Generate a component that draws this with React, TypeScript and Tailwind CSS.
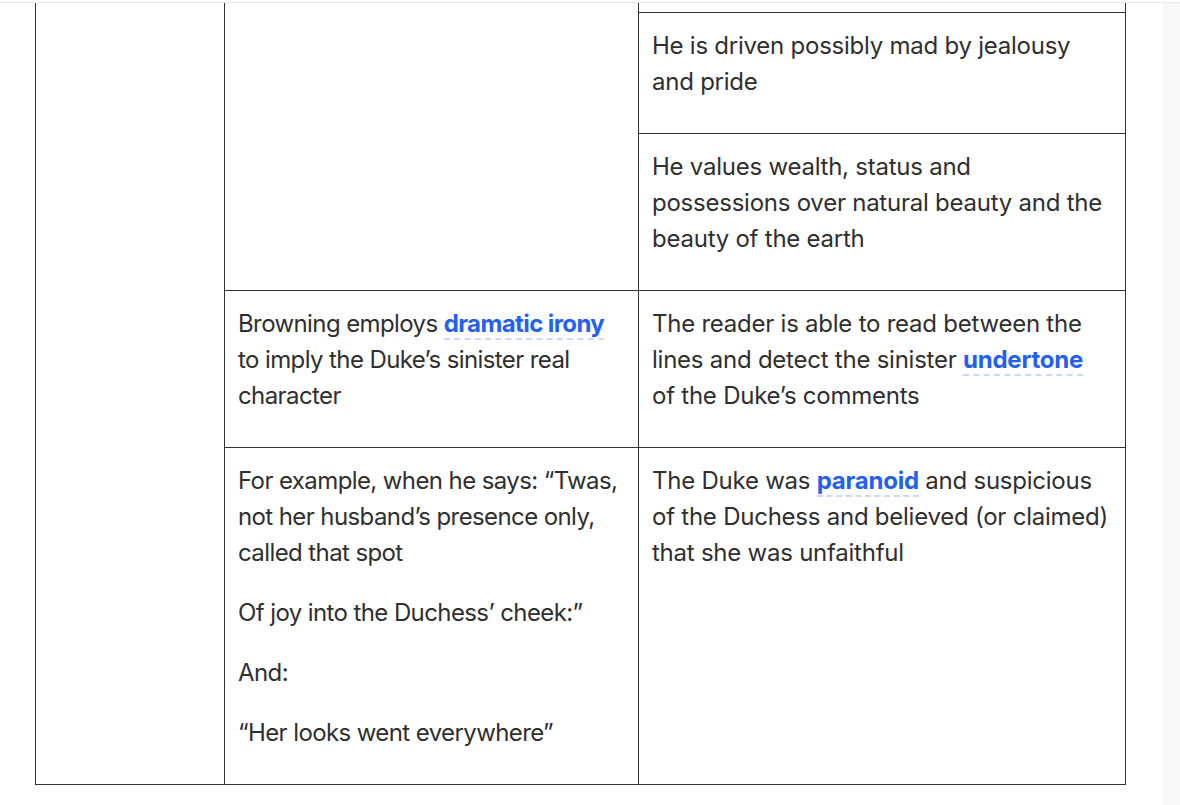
const Key = ({ children }: { children: string }) => (
  <span className="font-bold text-[#2260f2] border-b-2 border-dashed border-[#cbd8fc]">
    {children}
  </span>
)

const cell = "border border-[#333] align-top pt-[15px] pb-[9px] px-[13px]"
const left = `${cell} tracking-[-0.025em]`
const right = `${cell} tracking-[-0.01em]`

export default function App() {
  return (
    <div
      className="h-[805px] w-[1180px] bg-white text-[#2f2f2f] overflow-hidden flex flex-col"
      style={{ fontFamily: "Inter, 'Noto Sans', sans-serif" }}
    >
      {/* top bar edge */}
      <div className="h-[3px] border-b border-[#e6e6e6] shrink-0" />

      <div className="flex flex-1 min-h-0">
        <main className="flex-1 overflow-hidden pl-[35px]">
          <table className="border-collapse table-fixed -mt-[30px] text-[24px] leading-[36px] [&_p]:mb-6">
            <colgroup>
              <col className="w-[189px]" />
              <col className="w-[414px]" />
              <col className="w-[487px]" />
            </colgroup>
            <tbody>
              <tr className="h-[39px]">
                <td className="border border-[#333]" rowSpan={5} />
                <td className="border border-[#333]" rowSpan={3} />
                <td className="border border-[#333]" />
              </tr>
              <tr>
                <td className={right}>
                  <p>He is driven possibly mad by jealousy and pride</p>
                </td>
              </tr>
              <tr>
                <td className={right}>
                  <p>He values wealth, status and possessions over natural beauty and the beauty of the earth</p>
                </td>
              </tr>
              <tr>
                <td className={left}>
                  <p>
                    Browning employs <Key>dramatic irony</Key> to imply the Duke’s sinister real character
                  </p>
                </td>
                <td className={right}>
                  <p>
                    The reader is able to read between the lines and detect the sinister <Key>undertone</Key> of the
                    Duke’s comments
                  </p>
                </td>
              </tr>
              <tr>
                <td className={left}>
                  <p>For example, when he says: “Twas, not her husband’s presence only, called that spot</p>
                  <p>Of joy into the Duchess’ cheek:”</p>
                  <p>And:</p>
                  <p>“Her looks went everywhere”</p>
                </td>
                <td className={right}>
                  <p>
                    The Duke was <Key>paranoid</Key> and suspicious of the Duchess and believed (or claimed) that she
                    was unfaithful
                  </p>
                </td>
              </tr>
            </tbody>
          </table>
        </main>
        <aside className="w-[18px] shrink-0 bg-[#f8f8f8]" />
      </div>
    </div>
  )
}
